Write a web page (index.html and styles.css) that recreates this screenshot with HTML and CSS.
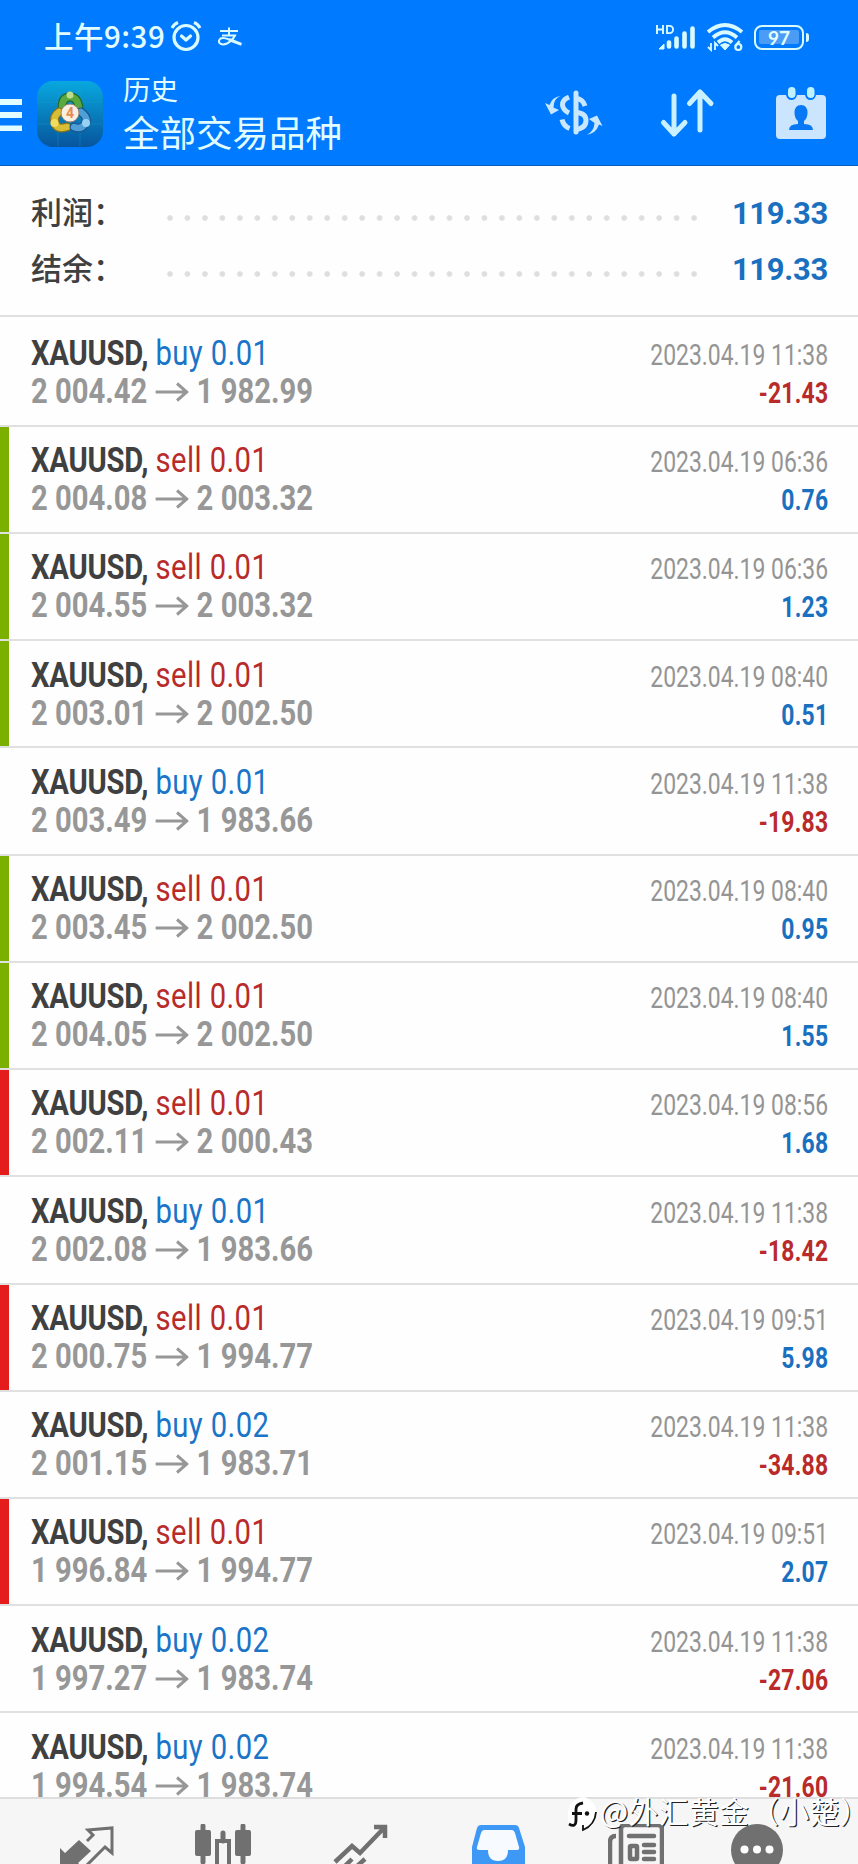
FILE: index.html
```html
<!DOCTYPE html>
<html lang="zh-CN">
<head>
<meta charset="utf-8">
<title>历史</title>
<link rel="stylesheet" href="styles.css">
</head>
<body>
<div class="screen">
  <header class="top">
    <div class="status">
      <span class="time">上午9:39</span>
      <svg class="alarm" width="32" height="32" viewBox="0 0 32 32" fill="none" stroke="#d9fbff" stroke-width="3.200" stroke-linecap="round" stroke-linejoin="round"><circle cx="16" cy="17.500" r="12"/><path d="M11.500 16l4.500 4 4.500-4"/><path d="M2 8Q4 4 8 2.500M24 2.500Q28 4 30 8" stroke-linecap="butt"/></svg>
      <svg class="pay" width="26" height="20" viewBox="0 0 26 20" fill="none" stroke="#d9fbff" stroke-width="2"><path d="M3 4H21M12 .5V8.500M5 8.500H18Q15.500 13.500 10 16.500Q5 18.500 2.500 16Q1 13.500 3.500 11.500Q6.500 10 12 12.500"/><path d="M12 12.500L24.500 17.300" stroke-width="3"/></svg>
      <span class="gap"></span>
      <svg class="signal" width="42" height="30" viewBox="0 0 42 30"><g fill="none" stroke="#d9fbff" stroke-width="1.900"><path d="M2 3v9M8 3v9M2 7.500h6M12 3.900h2.500a3.600 3.600 0 0 1 0 7.200H12z"/></g><g stroke="#d9fbff" stroke-width="4.600" stroke-linecap="round"><path d="M14 20.500v4M21.500 16.500v8M29.500 11.500v13M37.500 6.500v18"/></g><path d="M4 27l5-5v5z" fill="#d9fbff" stroke="#d9fbff"/></svg>
      <svg class="wifi" width="38" height="30" viewBox="0 0 38 30" fill="none" stroke="#d9fbff"><path d="M2 10Q19-4 36 10M7 15.500Q19 5 31 15.500M12 20.500Q19 14 26 20.500" stroke-width="3.800"/><path d="M14.500 23q4.500-3 9 0L19 28z" fill="#d9fbff"/><path d="M5 21v7l-3-3M9 28v-7l3 3" stroke-width="1.800"/><path d="M33.500 19l-4 5" stroke-width="2.200"/><circle cx="32.300" cy="25" r="3" stroke-width="2.200"/></svg>
      <div class="battery"><span>97</span></div><i class="nub"></i>
    </div>
    <div class="bar">
      <svg class="menu" width="22" height="34" viewBox="0 0 22 34" fill="#e2fdff"><path d="M0 1h22v6H0zM0 14h22v6H0zM0 27.500h22v5.500H0z"/></svg>
      <svg class="app" width="66" height="66" viewBox="0 0 66 66">
        <defs><linearGradient id="tile" x2="0" y2="1"><stop stop-color="#08a8e0"/><stop offset=".5" stop-color="#087fbd"/><stop offset="1" stop-color="#07559d"/></linearGradient></defs>
        <rect width="66" height="66" rx="16" fill="url(#tile)"/>
        <path d="M21 1v64M43 1v64M1 21h64M1 43h64" stroke="#23a9c7" stroke-width=".6" opacity=".5"/>
        <g fill="none" stroke-linecap="round"><path d="M25 27Q25 16 33 16T42 28" stroke="#24682d" stroke-width="9"/><path d="M25 27Q25 16 33 16T42 28" stroke="#58a93f" stroke-width="6.500"/><path d="M22 31Q16 35 18 42T30 46" stroke="#8b7415" stroke-width="9"/><path d="M22 31Q16 35 18 42T30 46" stroke="#d8be36" stroke-width="6.500"/><path d="M44 31Q52 37 48 43T37 46" stroke="#195493" stroke-width="9"/><path d="M44 31Q52 37 48 43T37 46" stroke="#4f9ed6" stroke-width="6.500"/></g>
        <circle cx="33" cy="14" r="3.500" fill="#bddb8b"/><circle cx="17.500" cy="42" r="4" fill="#f1dc61"/><circle cx="49" cy="42" r="4" fill="#98d1f4"/>
        <circle cx="33" cy="32" r="9" fill="#f9eee2" stroke="#998472"/><text x="33" y="37" text-anchor="middle" class="four">4</text>
      </svg>
      <div class="titles"><div class="small">历史</div><div class="large">全部交易品种</div></div>
      <svg class="dollar" width="60" height="48" viewBox="0 0 60 48" fill="none" stroke="#c9e8ff" stroke-width="5"><path d="M31 4v39" stroke-linecap="round"/><path d="M24 8Q17 11 17.500 16T24 24M17 30.500Q18.500 37 24.500 39.500M31 9.500Q38 10 40 17M31 23.500Q41 24 41 31.500T31 40.500"/><path d="M15.500 7Q8.500 9.500 8.500 18.500l5.500 2.500-8 4.500L0 14l4.500 2Q7 8 15.500 7zM42 45.500Q49 42.500 49.500 34L44 30l8-3.500L57.500 37 54 35.500Q51 44.500 42 45.500z" fill="#c9e8ff" stroke="none"/></svg>
      <svg class="sort" width="56" height="50" viewBox="0 0 56 50" fill="none" stroke="#c9f1ff" stroke-width="5" stroke-linecap="round" stroke-linejoin="round"><path d="M15 8v38M4.500 34.500L15 46l11-11.500M41 42V4M30.500 15.500L41 4l11 11.500"/></svg>
      <svg class="cal" width="50" height="53" viewBox="0 0 50 53"><path d="M4 8h6q1 5 5.500 5T21 8h8q1 5 5.500 5T40 8h6q4 0 4 4v36q0 4-4 4H4q-4 0-4-4V12q0-4 4-4z" fill="#cce5ff"/><rect x="12" y="0" width="7.500" height="11" rx="3.700" fill="#bff1ff"/><rect x="31" y="0" width="7.500" height="11" rx="3.700" fill="#bff1ff"/><path d="M25 18q6.500 0 6.500 8 0 5-3.500 8v3q9 0 9 6H13q0-6 9-6v-3q-3.500-3-3.500-8 0-8 6.500-8z" fill="#0878f5"/></svg>
    </div>
  </header>
  <section class="summary">
    <div class="sum"><span class="label">利润：</span><span class="dots"></span><b>119.33</b></div>
    <div class="sum"><span class="label">结余：</span><span class="dots"></span><b>119.33</b></div>
  </section>
  <main class="deals" id="deals"></main>
  <nav class="tabs">
    <div class="tab"><svg width="56" height="56" viewBox="0 0 56 56"><path d="M21 16l12 11-13 12 7 6H2V24l5 5z" fill="#707070"/><path d="M29 17l6-6-5-5 24-2v25l-7-6-24 24" fill="none" stroke="#707070" stroke-width="3"/></svg></div>
    <div class="tab"><svg width="56" height="56" viewBox="0 0 56 56" fill="#707070"><rect x="0" y="6" width="16" height="26" rx="2"/><rect x="40" y="6" width="16" height="26" rx="2"/><path d="M8 2v36M48 2v36M28 9v8" stroke="#707070" stroke-width="5" stroke-linecap="round"/><rect x="22" y="17" width="12" height="34" fill="none" stroke="#707070" stroke-width="4"/></svg></div>
    <div class="tab"><svg width="56" height="56" viewBox="0 0 56 56" fill="none" stroke="#707070" stroke-width="4.500"><path d="M2 38l17-16 8 7L51 4M41 3h11v11"/><path d="M12 42l7-7M22 44l10-9"/></svg></div>
    <div class="tab"><svg width="56" height="56" viewBox="0 0 56 56"><path d="M11 1h34q3 0 4 3l6 19v32H2V23L7 4q1-3 4-3z" fill="#3e98f6"/><path d="M14 6h28q2 0 3 3l4 14q1 3-2 3h-9q0 11-10 11T18 26H9q-3 0-2-3l4-14q1-3 3-3z" fill="#f7fbff"/></svg></div>
    <div class="tab"><svg width="56" height="56" viewBox="0 0 56 56" fill="none" stroke="#707070" stroke-width="4.500"><path d="M13 55V5q0-4 4-4h33q4 0 4 4v50M8 12q-6 0-6 6v37" /><path d="M21 12h25M36 21h10M36 28h10M36 35h10" stroke-linecap="round"/><rect x="22" y="22" width="7" height="13" rx="1"/></svg></div>
    <div class="tab more"><svg width="56" height="56" viewBox="0 0 56 56"><circle cx="28" cy="26" r="26" fill="#707070"/><g fill="#fff"><circle cx="15.500" cy="25.500" r="4"/><circle cx="28" cy="25.500" r="4"/><circle cx="40.500" cy="25.500" r="4"/></g></svg></div>
  </nav>
  <div class="mark">
    <svg width="32" height="36" viewBox="0 0 32 36"><path d="M16 1a14.500 14.500 0 0 1 14 14q0 13-14 19V30Q6 34 2 25 0 4 16 1z" fill="#fff"/><path d="M3 28q7 4 7-4V13q0-5 7-6M6 17.500h10" fill="none" stroke="#111" stroke-width="2.800"/><circle cx="21" cy="17.500" r="2.200" fill="#111"/><path d="M30 16q-1 13-13 18v-5" fill="none" stroke="#111" stroke-width="1.800"/></svg>
    <span>@外汇黄金（小楚）</span>
  </div>
</div>
<script src="deals.js"></script>
</body>
</html>
```
FILE: styles.css
```css
* { box-sizing: border-box; }
body { margin: 0; background: #fefefe; font-family: Roboto, "Noto Sans CJK SC", sans-serif; }
.screen { position: relative; width: 858px; height: 1864px; overflow: hidden; display: flex; flex-direction: column; }
.top { height: 166px; background: #007bff; border-bottom: 1px solid #075fbd; color: #e2fdff; flex: none; }
.status { height: 74px; display: flex; align-items: center; padding-left: 44px; }
.time { width: 126px; margin-top: -4px; font: 500 29.5px/40px "Noto Sans CJK SC", sans-serif; white-space: nowrap; letter-spacing: .5px; }
.alarm { margin-top: -2px; }
.pay { margin-left: 15px; }
.gap { flex: 1; }
.signal { margin-right: 9px; }
.wifi { margin-right: 10px; }
.battery { width: 50px; height: 25px; border: 2.500px solid #d9fbff; border-radius: 8px; padding: 3px; }
.battery span { display: block; height: 14px; background: #4a9cf5; border-radius: 2px; font: 700 19px/15px Lato, sans-serif; text-align: center; }
.nub { width: 3px; height: 9px; margin: 0 49px 0 2px; background: #d9fbff; border-radius: 0 3px 3px 0; }
.bar { height: 91px; display: flex; align-items: flex-start; }
.menu { margin-top: 24px; }
.app { margin: 7px 0 0 15px; }
.four { font: 700 14px Roboto, sans-serif; fill: #e58a50; }
.titles { width: 422px; margin-left: 20px; font-family: "Noto Sans CJK SC", sans-serif; font-weight: 400; white-space: nowrap; }
.small { font-size: 27.500px; line-height: 34px; margin-top: -3px; }
.large { font-size: 36.500px; line-height: 50px; margin-top: 2px; }
.dollar { margin-top: 15px; }
.sort { margin: 14px 0 0 54px; }
.cal { margin: 13px 0 0 61px; }
.summary { height: 151px; flex: none; padding: 18px 30px 0 31px; border-bottom: 2px solid #e0e0e0; }
.sum { height: 56px; display: flex; align-items: center; }
.label { width: 132px; margin-top: -2px; color: #404040; font: 500 31px/56px "Noto Sans CJK SC", sans-serif; white-space: nowrap; }
.dots { width: 535px; height: 6px; margin-top: 12px; background: radial-gradient(circle at 7px 3px, #dedede 2.400px, transparent 3.200px) 0 0 / 17.480px 6px repeat-x; }
.sum b { margin: 3px 0 0 auto; color: #1a70c0; font-size: 31px; line-height: 56px; font-weight: 700; letter-spacing: -.3px; }
.deals { height: 1480px; flex: none; overflow: hidden; }
.deal { height: 107.230px; display: flex; justify-content: space-between; padding: 15.300px 30px 0 22px; border-left: 9px solid transparent; background: linear-gradient(#e0e0e0, #e0e0e0) 0 100% / 100% 2px no-repeat border-box; line-height: 38px; white-space: nowrap; }
.deal:first-child { height: 109.800px; padding-top: 17.500px; }
.stripe-green, .stripe-red { position: relative; }
.stripe-green::before, .stripe-red::before { content: ""; position: absolute; left: -9px; top: 0; bottom: 2px; width: 9px; }
.stripe-green::before { background: #7baf00; }
.stripe-red::before { background: #e51c1c; }
.left { transform: scaleX(.835); transform-origin: 0 0; font-size: 35px; }
.right { transform: scaleX(.79); transform-origin: 100% 0; text-align: right; font-size: 29px; }
.symbol { color: #404040; font-weight: 700; letter-spacing: -.3px; }
.prices { color: #979797; font-weight: 700; display: flex; align-items: center; }
.prices svg { margin: 0 9px 0 10px; }
.buy, .sell { letter-spacing: .5px; }
.buy { color: #1a74c8; }
.sell { color: #b92a2a; }
.date { color: #949494; line-height: 41px; }
.gain, .loss { line-height: 35px; font-weight: 700; letter-spacing: .3px; margin-right: -.3px; }
.gain { color: #1a70c0; }
.loss { color: #b92a2a; }
.tabs { height: 67px; flex: none; background: #f6f6f6; border-top: 2px solid #dedede; display: flex; padding: 25px 0 0 17px; overflow: hidden; }
.tab { width: 137.500px; flex: none; display: flex; justify-content: center; }
.tab.more { width: 105px; }
.mark { position: absolute; left: 566px; top: 1789px; display: flex; align-items: center; color: #fff; font: 400 29.700px/44px "Noto Sans CJK SC", sans-serif; white-space: nowrap; text-shadow: 1.200px 1.200px 0 #222; }
.mark svg { margin-top: 6px; }
.mark span { margin-left: 2px; letter-spacing: .5px; }
```
FILE: deals.js
```js
const deals = [
  ["buy 0.01", "2 004.42", "1 982.99", "11:38", "-21.43", ""],
  ["sell 0.01", "2 004.08", "2 003.32", "06:36", "0.76", "green"],
  ["sell 0.01", "2 004.55", "2 003.32", "06:36", "1.23", "green"],
  ["sell 0.01", "2 003.01", "2 002.50", "08:40", "0.51", "green"],
  ["buy 0.01", "2 003.49", "1 983.66", "11:38", "-19.83", ""],
  ["sell 0.01", "2 003.45", "2 002.50", "08:40", "0.95", "green"],
  ["sell 0.01", "2 004.05", "2 002.50", "08:40", "1.55", "green"],
  ["sell 0.01", "2 002.11", "2 000.43", "08:56", "1.68", "red"],
  ["buy 0.01", "2 002.08", "1 983.66", "11:38", "-18.42", ""],
  ["sell 0.01", "2 000.75", "1 994.77", "09:51", "5.98", "red"],
  ["buy 0.02", "2 001.15", "1 983.71", "11:38", "-34.88", ""],
  ["sell 0.01", "1 996.84", "1 994.77", "09:51", "2.07", "red"],
  ["buy 0.02", "1 997.27", "1 983.74", "11:38", "-27.06", ""],
  ["buy 0.02", "1 994.54", "1 983.74", "11:38", "-21.60", ""]
];
const arrow = '<svg width="40" height="20" viewBox="0 0 34 20" preserveAspectRatio="none" fill="none" stroke="#979797" stroke-width="3"><path d="M0 10H32M22 1.500l10 8.500-10 8.500"/></svg>';
document.getElementById("deals").innerHTML = deals.map(([op, from, to, time, profit, stripe]) => `
  <div class="deal ${stripe ? "stripe-" + stripe : ""}">
    <div class="left">
      <div><span class="symbol">XAUUSD,</span> <span class="${op.split(" ")[0]}">${op}</span></div>
      <div class="prices"><span>${from}</span>${arrow}<span>${to}</span></div>
    </div>
    <div class="right">
      <div class="date">2023.04.19 ${time}</div>
      <div class="${profit[0] === "-" ? "loss" : "gain"}">${profit}</div>
    </div>
  </div>`).join("");
```
